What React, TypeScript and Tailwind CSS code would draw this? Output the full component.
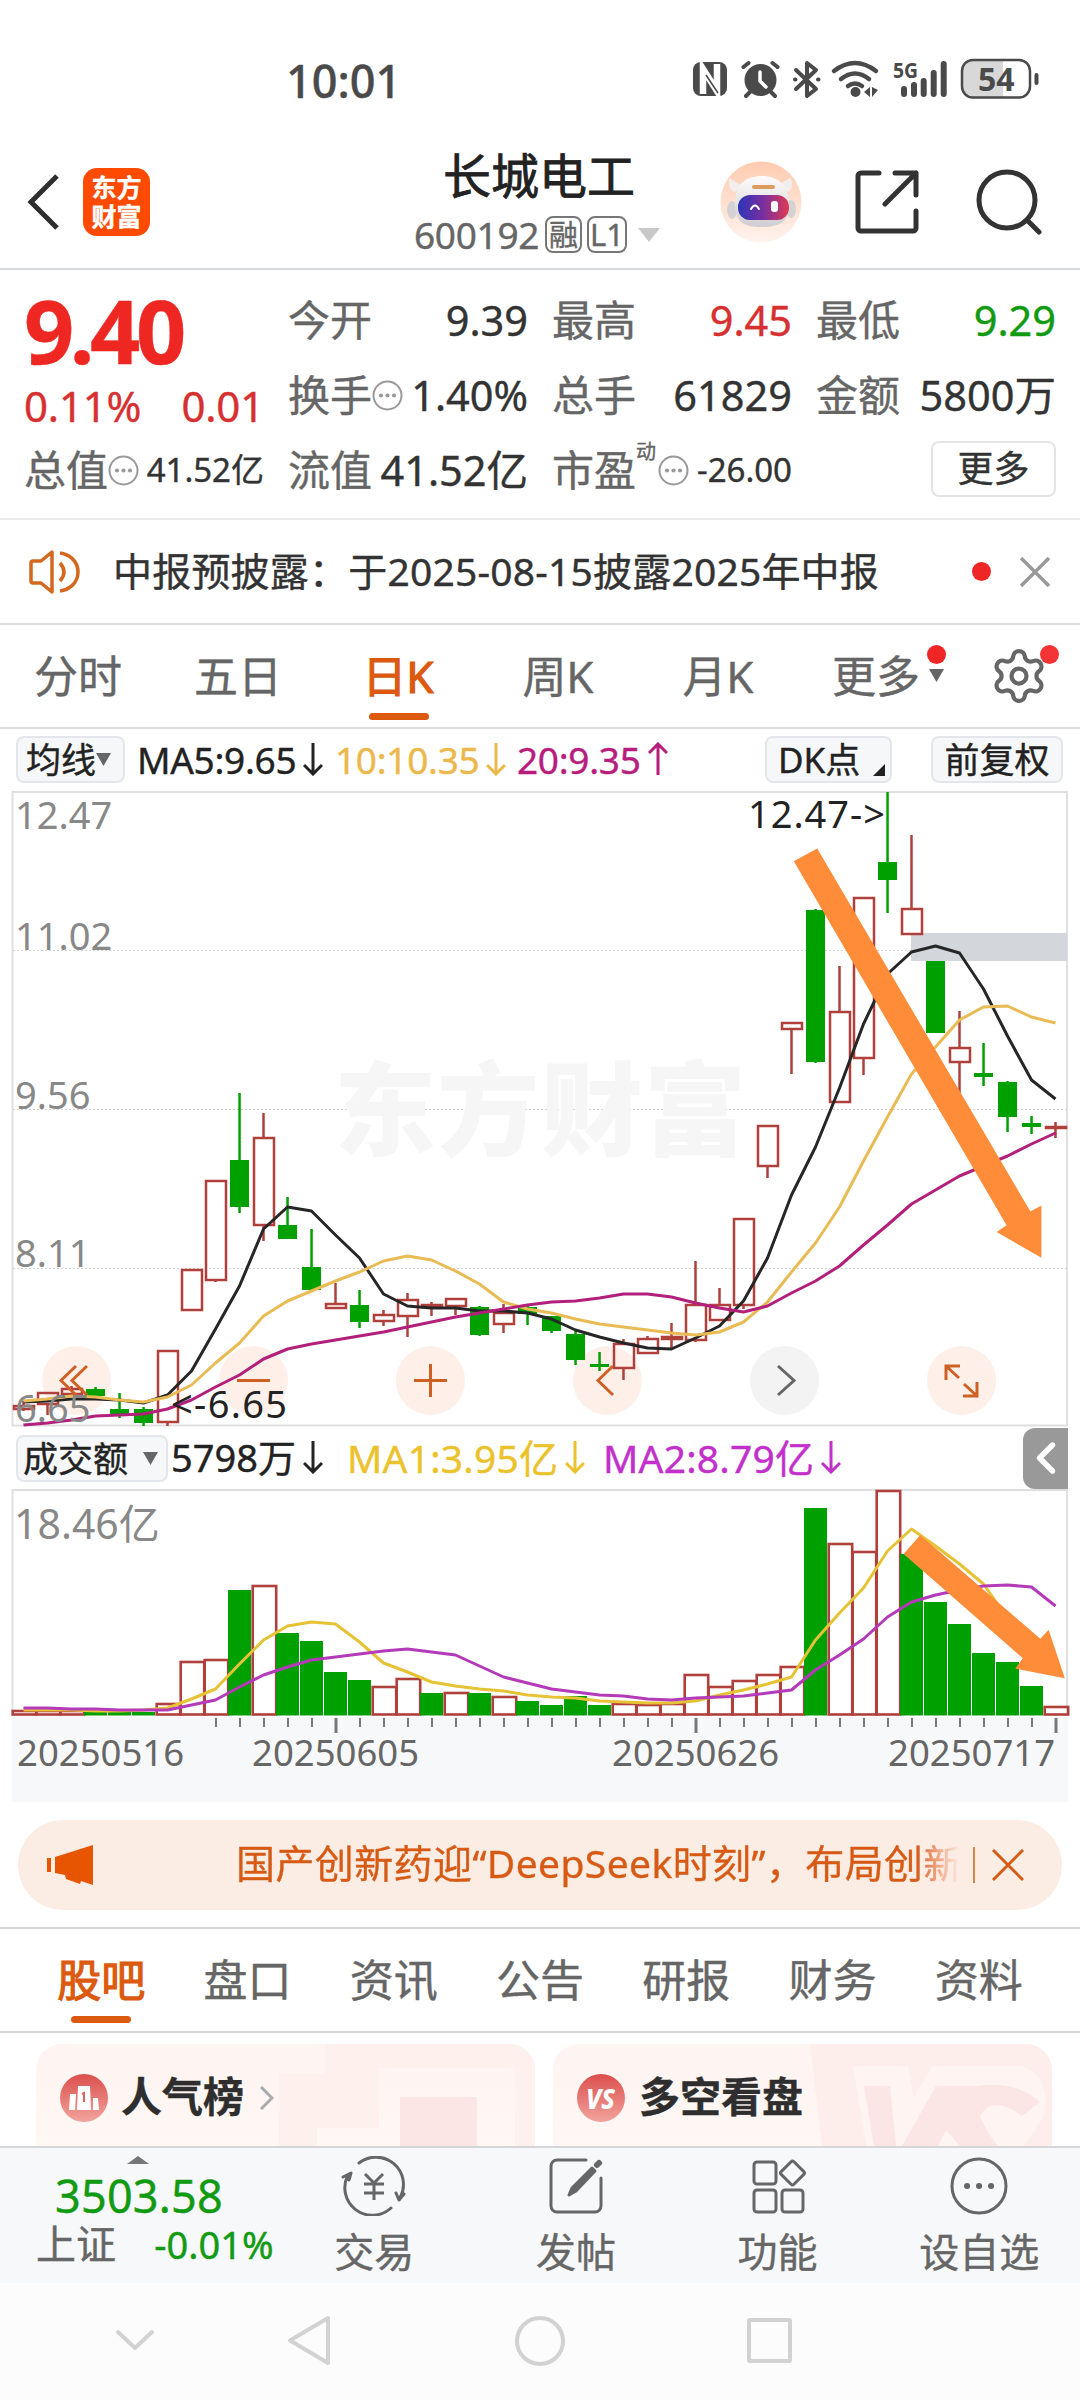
import type { ReactNode } from 'react';
import { ChevronLeft, Settings } from 'lucide-react';
import clsx from 'clsx';

type Color = 'r' | 'g';

// color, wick top, body top, body bottom, wick bottom
type Candle = [Color, number, number, number, number];

const CANDLES: Candle[] = [
  ['r', 1401, 1406, 1409, 1411],
  ['r', 1393, 1393, 1404, 1415],
  ['r', 1386, 1389, 1394, 1397],
  ['g', 1387, 1389, 1396, 1400],
  ['g', 1393, 1409, 1416, 1418],
  ['g', 1407, 1409, 1423, 1426],
  ['r', 1351, 1351, 1422, 1426],
  ['r', 1270, 1270, 1310, 1310],
  ['r', 1181, 1181, 1280, 1282],
  ['g', 1093, 1160, 1207, 1213],
  ['r', 1113, 1138, 1225, 1241],
  ['g', 1197, 1225, 1239, 1239],
  ['g', 1229, 1267, 1290, 1291],
  ['r', 1283, 1304, 1308, 1308],
  ['g', 1290, 1305, 1322, 1328],
  ['r', 1310, 1315, 1321, 1326],
  ['r', 1293, 1300, 1316, 1337],
  ['r', 1302, 1305, 1307, 1316],
  ['r', 1299, 1299, 1306, 1315],
  ['g', 1306, 1307, 1335, 1336],
  ['r', 1304, 1313, 1324, 1333],
  ['g', 1306, 1307, 1314, 1325],
  ['g', 1316, 1316, 1331, 1333],
  ['g', 1331, 1334, 1360, 1365],
  ['g', 1352, 1364, 1367, 1371],
  ['r', 1339, 1344, 1368, 1380],
  ['r', 1336, 1339, 1353, 1354],
  ['r', 1323, 1337, 1339, 1348],
  ['r', 1261, 1305, 1340, 1342],
  ['r', 1288, 1305, 1320, 1320],
  ['r', 1219, 1219, 1305, 1309],
  ['r', 1126, 1126, 1166, 1178],
  ['r', 1023, 1023, 1029, 1074],
  ['g', 909, 910, 1062, 1063],
  ['r', 966, 1012, 1102, 1102],
  ['r', 898, 898, 1058, 1075],
  ['g', 792, 862, 880, 913],
  ['r', 835, 909, 934, 934],
  ['g', 961, 961, 1033, 1033],
  ['r', 1011, 1048, 1062, 1094],
  ['g', 1043, 1073, 1077, 1086],
  ['g', 1081, 1082, 1117, 1132],
  ['g', 1116, 1123, 1127, 1134],
  ['r', 1122, 1127, 1128, 1138],
];

const MA5 = [
  1402, 1401, 1399, 1399, 1400, 1403, 1395, 1371, 1329, 1286, 1229, 1207, 1211, 1235, 1258, 1294, 1306, 1308, 1308,
  1311, 1311, 1313, 1319, 1330, 1337, 1343, 1348, 1349, 1338, 1326, 1301, 1258, 1195, 1147, 1088, 1024, 974, 952, 946,
  953, 989, 1036, 1080, 1099,
];
const MA10 = [
  1401, 1399, 1396, 1397, 1400, 1402, 1397, 1385, 1363, 1343, 1316, 1301, 1291, 1281, 1272, 1261, 1256, 1260, 1271,
  1284, 1302, 1309, 1313, 1319, 1324, 1327, 1330, 1333, 1335, 1332, 1322, 1302, 1272, 1243, 1207, 1161, 1117, 1074,
  1047, 1020, 1007, 1006, 1017, 1023,
];
const MA20 = [
  1425, 1423, 1420, 1416, 1415, 1414, 1409, 1400, 1387, 1375, 1359, 1349, 1344, 1340, 1336, 1332, 1327, 1322, 1317,
  1313, 1309, 1305, 1302, 1301, 1298, 1294, 1294, 1297, 1303, 1308, 1312, 1306, 1293, 1281, 1266, 1245, 1225, 1204,
  1190, 1176, 1166, 1156, 1144, 1133,
];

const VOLUMES: [Color, number][] = [
  ['r', 1711], ['r', 1711], ['r', 1711], ['g', 1712], ['g', 1712], ['g', 1712], ['r', 1704], ['r', 1662], ['r', 1660],
  ['g', 1590], ['r', 1586], ['g', 1633], ['g', 1641], ['g', 1672], ['g', 1680], ['r', 1687], ['r', 1679], ['g', 1693],
  ['r', 1693], ['g', 1693], ['r', 1697], ['g', 1701], ['g', 1705], ['g', 1696], ['g', 1705], ['r', 1704], ['r', 1705],
  ['r', 1704], ['r', 1675], ['r', 1687], ['r', 1681], ['r', 1675], ['r', 1667], ['g', 1508], ['r', 1544], ['r', 1552],
  ['r', 1491], ['g', 1554], ['g', 1602], ['g', 1624], ['g', 1653], ['g', 1662], ['g', 1686], ['r', 1707],
];
const VOL_MA1 = [
  1710, 1710, 1710, 1711, 1711, 1710, 1708, 1699, 1689, 1664, 1640, 1626, 1622, 1624, 1642, 1663, 1672, 1682, 1686,
  1689, 1691, 1695, 1697, 1698, 1701, 1702, 1703, 1703, 1701, 1695, 1690, 1684, 1677, 1640, 1613, 1588, 1551, 1529,
  1546, 1564, 1584, 1618, 1644, 1660,
];
const VOL_MA2 = [
  1708, 1708, 1709, 1709, 1710, 1710, 1710, 1705, 1700, 1687, 1675, 1667, 1660, 1657, 1654, 1651, 1649, 1652, 1655,
  1666, 1677, 1683, 1689, 1692, 1695, 1696, 1699, 1700, 1698, 1697, 1696, 1693, 1690, 1670, 1655, 1639, 1617, 1602,
  1595, 1590, 1586, 1585, 1587, 1606,
];

const RED = '#b0403c';
const GREEN = '#00a000';

const cx = (i: number) => 23.5 + i * 24;
const line = (ys: number[]) => ys.map((y, i) => `${cx(i)},${y}`).join(' ');

function StatusBar() {
  return (
    <div className="flex h-[134px] shrink-0 justify-between pt-[58px] pr-[41px] pl-[286px] text-[#4a4a4a]">
      <span className="text-[45px] leading-[46px] font-medium">10:01</span>
      <svg className="overflow-visible" width="346" height="44" viewBox="693 58 346 44" fill="none" stroke="#4a4a4a" strokeLinecap="round">
        <rect x="693" y="62" width="34" height="34" rx="8" fill="#4a4a4a" stroke="none" />
        <path d="M703 94V69L717 91V64" stroke="#fff" strokeWidth="6.500" strokeLinecap="butt" />
        <path d="M706 75L718 93" stroke="#4a4a4a" strokeWidth="1.500" strokeLinecap="butt" />
        <circle cx="760.5" cy="80" r="16" fill="#4a4a4a" stroke="none" />
        <path d="M743.5 67l5-4M777.5 67l-5-4M750 92l-4 4M771 92l4 4" strokeWidth="4" />
        <path d="M760 72v9l6 6" stroke="#fff" strokeWidth="3.5" />
        <path d="M796 70l20 19-9 7V63l9 7-20 19" strokeWidth="4" strokeLinejoin="round" />
        <path d="M795 79.500h.5M818 79.500h.5" strokeWidth="4" />
        <path d="M834 71q21-16 42 0M841 79q14-11 28 0M848 86q7-5 14 0" strokeWidth="4.500" />
        <circle cx="855.500" cy="92" r="5" fill="#4a4a4a" stroke="none" />
        <path d="M864 92l6-5v10zM872 87v10l6-7z" fill="#4a4a4a" stroke="none" />
        <text x="893" y="78" fontSize="22" fontWeight="700" textLength="25" lengthAdjust="spacingAndGlyphs" fill="#4a4a4a" stroke="none">
          5G
        </text>
        <path d="M904 89v5M914 85v9M923.700 81v13M933.700 73v21M943.700 64v30" strokeWidth="6" />
        <path d="M1003 61h-29a11 11 0 0 0-11 11v14a11 11 0 0 0 11 11h29z" fill="#d8d8d8" stroke="none" />
        <rect x="962" y="60" width="68" height="37.500" rx="11" strokeWidth="2.500" />
        <path d="M1036.500 75v8" strokeWidth="4" />
        <text x="978" y="91" fontSize="32" fontWeight="700" fill="#4a4a4a" stroke="none">
          54
        </text>
      </svg>
    </div>
  );
}

function Robot() {
  return (
    <svg width="82" height="82" viewBox="0 0 82 82">
      <defs>
        <linearGradient id="halo" x1="0" y1="0" x2="0" y2="1">
          <stop offset="0" stopColor="#ffcbb0" />
          <stop offset="1" stopColor="#fff3ee" />
        </linearGradient>
        <linearGradient id="visor">
          <stop offset="0" stopColor="#2b35b8" />
          <stop offset=".5" stopColor="#7a2f9e" />
          <stop offset="1" stopColor="#e03a52" />
        </linearGradient>
        <linearGradient id="shell" x1="0" y1="0" x2="0" y2="1">
          <stop offset="0" stopColor="#fdfbfb" />
          <stop offset="1" stopColor="#cfcdd2" />
        </linearGradient>
      </defs>
      <circle cx="41" cy="41" r="40.500" fill="url(#halo)" />
      <path d="M9 17q-1 11 5 14l8-6zM70 17q5 9-2 14l-8-8z" fill="#f3eeee" />
      <ellipse cx="12" cy="49" rx="5" ry="9" fill="#d5d2d6" />
      <ellipse cx="71" cy="48" rx="5" ry="9" fill="#d5d2d6" />
      <path d="M15 45C14 24 25 15 42 15s27 10 27 29c0 16-8 22-27 22S16 61 15 45z" fill="url(#shell)" />
      <rect x="32" y="24" width="23" height="4" rx="2" fill="#dd9c60" />
      <rect x="18" y="34" width="51" height="25" rx="12" fill="url(#visor)" />
      <path d="M31 48q4-7 8 0" fill="none" stroke="#fff" strokeWidth="2" strokeLinecap="round" />
      <rect x="51" y="40" width="7" height="11" rx="3" fill="#fff" />
    </svg>
  );
}

function Header() {
  return (
    <div className="flex h-[136px] shrink-0 items-center border-b-2 border-[#d6d9dc] pl-[26px]">
      <svg className="mt-[2px]" width="34" height="58" viewBox="0 0 34 58" fill="none" stroke="#2e2e2e" strokeWidth="5">
        <path d="M31 3L5 29l26 26" />
      </svg>
      <div className="mt-[2px] ml-[23px] flex h-[68px] w-[67px] flex-col items-center justify-center rounded-[14px] bg-[#ff4a00] text-[25px] leading-[29px] font-bold text-white">
        <span>东方</span>
        <span>财富</span>
      </div>
      <div className="ml-[264px] flex w-[250px] flex-col items-center">
        <span className="text-[48px] leading-[60px] text-[#222] [-webkit-text-stroke:0.8px]">长城电工</span>
        <div className="mt-[7px] flex w-full items-center gap-[5px] text-[#666]">
          <span className="w-[126px] text-[37px] leading-[44px] tracking-[-0.3px]">600192</span>
          <span className="flex h-[37px] w-[37px] shrink-0 items-center justify-center rounded-[8px] border-2 border-[#777] text-[29px] leading-none">
            融
          </span>
          <span className="flex h-[37px] w-[40px] shrink-0 items-center justify-center rounded-[8px] border-2 border-[#777] text-[31px] leading-none">
            L1
          </span>
          <svg className="ml-[6px] shrink-0" width="22" height="14" viewBox="0 0 22 14">
            <path d="M0 0h22L11 14z" fill="#c8c8c8" />
          </svg>
        </div>
      </div>
      <div className="mt-[2px] ml-[56px]">
        <Robot />
      </div>
      <svg className="mt-[2px] ml-[53px]" width="64" height="64" viewBox="0 0 64 64" fill="none" stroke="#333" strokeWidth="5" strokeLinecap="round" strokeLinejoin="round">
        <path d="M24 3H6a3 3 0 0 0-3 3v52a3 3 0 0 0 3 3h52a3 3 0 0 0 3-3V41M40 3h21v22M61 3L30 34" />
      </svg>
      <svg className="mt-[2px] ml-[57px]" width="66" height="66" viewBox="0 0 66 66" fill="none" stroke="#333" strokeWidth="5" strokeLinecap="round">
        <circle cx="31" cy="31" r="28" />
        <path d="M51 51l12 12" />
      </svg>
    </div>
  );
}

function Dots() {
  return (
    <svg width="31" height="31" viewBox="0 0 31 31" fill="#999">
      <circle cx="15.500" cy="15.500" r="14" fill="none" stroke="#999" strokeWidth="2" />
      <circle cx="9" cy="15.500" r="2.100" />
      <circle cx="15.500" cy="15.500" r="2.100" />
      <circle cx="22" cy="15.500" r="2.100" />
    </svg>
  );
}

function Field({ label, value, className, dots, small }: {
  label: ReactNode;
  value: string;
  className?: string;
  dots?: boolean;
  small?: boolean;
}) {
  return (
    <div className="flex items-center justify-between">
      <span className="flex items-center text-[42px] text-[#666]">
        {label}
        {dots && <Dots />}
      </span>
      <span className={clsx(className ?? 'text-[#333]', small && 'text-[33px]')}>{value}</span>
    </div>
  );
}

function Quote() {
  return (
    <div className="h-[250px] shrink-0 border-b-2 border-[#ebebeb] text-[41.500px] leading-[50px] whitespace-nowrap">
      <div className="flex pt-[25px] pr-[24px] pl-[24px]">
        <div className="w-[240px]">
          <div className="h-[82px] text-[88px] leading-[70px] font-bold tracking-[-4.500px] text-[#ee2722]">9.40</div>
          <div className="flex h-[68px] justify-between pt-[4px] pr-0 text-[42px] tracking-[-0.2px] text-[#d63031]">
            <span>0.11%</span>
            <span>0.01</span>
          </div>
          <Field label="总值" value="41.52亿" dots small />
        </div>
        <div className="ml-[24px] grid w-[240px] content-start gap-[25px]">
          <Field label="今开" value="9.39" />
          <Field label="换手" value="1.40%" dots />
          <Field label="流值" value="41.52亿" />
        </div>
        <div className="ml-[24px] grid w-[240px] content-start gap-[25px]">
          <Field label="最高" value="9.45" className="text-[#d63031]" />
          <Field label="总手" value="61829" />
          <Field
            label={
              <>
                市盈<sup className="top-[-18px] mr-[2px] text-[20px] leading-none">动</sup>
              </>
            }
            value="-26.00"
            dots
            small
          />
        </div>
        <div className="ml-[24px] grid w-[240px] content-start gap-[25px]">
          <Field label="最低" value="9.29" className="text-[#129a12]" />
          <Field label="金额" value="5800万" />
          <div className="mt-[-4px] flex h-[56px] w-[125px] items-center justify-center justify-self-end rounded-[8px] border-2 border-[#e4e4e4] text-[36px] text-[#333]">
            更多
          </div>
        </div>
      </div>
    </div>
  );
}

function Notice() {
  return (
    <div className="flex h-[105px] shrink-0 items-center border-b-2 border-[#dcdcdc] pl-[28px] whitespace-nowrap">
      <svg width="54" height="46" viewBox="0 0 54 46" fill="none" stroke="#d2691e" strokeWidth="3.500" strokeLinejoin="round">
        <path d="M24 3v40L13 34H5q-2 0-2-2V14q0-2 2-2h8z" />
        <path d="M32 14q8 9 0 18M32 4c8 1 18 7 18 19s-10 18-18 19" />
      </svg>
      <span className="ml-[31px] w-[772px] pb-[2px] text-[39px] leading-none tracking-[0.2px] text-[#333]">
        中报预披露：于2025-08-15披露2025年中报
      </span>
      <span className="ml-[87px] h-[19px] w-[19px] rounded-full bg-[#f02525]" />
      <svg className="ml-[29px]" width="30" height="30" viewBox="0 0 30 30" stroke="#999" strokeWidth="3.500">
        <path d="M1 1l28 28M29 1L1 29" />
      </svg>
    </div>
  );
}

const PERIODS = ['分时', '五日', '日K', '周K', '月K'];

function PeriodTabs() {
  return (
    <div className="flex h-[104px] shrink-0 items-center border-b-2 border-[#dcdcdc] text-[44px] leading-none text-[#666]">
      {PERIODS.map((p) => (
        <div key={p} className={clsx('relative flex h-full w-[160px] items-center justify-center pr-[4px]', p === '日K' && 'text-[#dc5a10] [-webkit-text-stroke:1.2px]')}>
          {p}
          {p === '日K' && <span className="absolute bottom-[7px] left-[49px] h-[7px] w-[60px] rounded-full bg-[#dc5a10]" />}
        </div>
      ))}
      <div className="relative ml-[32px] w-[114px]">
        更多
        <span className="absolute top-[-9px] right-0 h-[19px] w-[19px] rounded-full bg-[#f02525]" />
        <svg className="absolute top-[15px] right-[2px]" width="15" height="13" viewBox="0 0 15 13">
          <path d="M0 0h15L7.500 13z" fill="#666" />
        </svg>
      </div>
      <div className="relative ml-[43px]">
        <Settings size={60} strokeWidth={1.7} color="#666" />
        <span className="absolute top-[-1px] right-[-10px] h-[19px] w-[19px] rounded-full bg-[#f53535]" />
      </div>
    </div>
  );
}

function Arrow({ up }: { up?: boolean }) {
  return (
    <svg className={clsx('ml-[7px] shrink-0', up && 'rotate-180')} width="20" height="34" viewBox="0 0 20 34" fill="none" stroke="currentColor" strokeWidth="3">
      <path d="M10 1v31M1 23l9 9 9-9" />
    </svg>
  );
}

function Chip({ children, className }: { children: ReactNode; className?: string }) {
  return (
    <div className={clsx('flex h-[47px] shrink-0 items-center rounded-[8px] border-2 border-[#e3e6ea] bg-[#f6f7f9] text-[35px] leading-none tracking-normal text-[#222]', className)}>
      {children}
    </div>
  );
}

function MaRow() {
  return (
    <div className="flex h-[62px] shrink-0 items-center pb-[2px] pl-[16px] text-[37px] leading-none tracking-[-0.3px] whitespace-nowrap">
      <Chip className="w-[109px] pl-[8px]">
        均线
        <svg width="15" height="13" viewBox="0 0 15 13">
          <path d="M0 0h15L7.500 13z" fill="#666" />
        </svg>
      </Chip>
      <span className="ml-[12px] flex w-[198px] items-center text-[#222]">MA5:9.65<Arrow /></span>
      <span className="flex w-[182px] items-center text-[#ecb84c]">10:10.35<Arrow /></span>
      <span className="flex w-[248px] items-center text-[#b81c7c]">20:9.35<Arrow up /></span>
      <Chip className="w-[127px] justify-between pl-[11px]">
        DK点
        <svg className="mt-[22px] mr-[5px]" width="12" height="12" viewBox="0 0 12 12">
          <path d="M12 0v12H0z" fill="#222" />
        </svg>
      </Chip>
      <Chip className="ml-[39px] w-[132px] justify-center">前复权</Chip>
    </div>
  );
}

const PRICE_LABELS: [string, number][] = [['12.47', 829], ['11.02', 950], ['9.56', 1109], ['8.11', 1267], ['6.65', 1422]];

function PriceChart() {
  return (
    <svg className="block shrink-0" width="1080" height="636" viewBox="0 791 1080 636" fill="none">
      <rect x="12.500" y="792" width="1054.500" height="633.500" stroke="#dfdfdf" strokeWidth="2" />
      <g stroke="#d4d4d4" strokeDasharray="2 2">
        <path d="M13 950.500h1054M13 1109.500h1054M13 1268.500h1054" />
      </g>
      <text x="334" y="1148" fontSize="102" fontWeight="900" fill="#f6f6f6" textLength="412">
        东方财富
      </text>
      <rect x="911" y="933" width="156" height="28" fill="#d3d6db" />
      {[76.5, 253.5, 430.5, 607.5, 784.5, 961.5].map((x) => (
        <circle key={x} cx={x} cy="1380.500" r="34.500" fill={x === 784.5 ? '#f3f3f3' : '#fef0e8'} />
      ))}
      {CANDLES.map(([c, wt, bt, bb, wb], i) => {
        const x = cx(i);
        if (c === 'g') {
          return (
            <g key={i} fill={GREEN}>
              <rect x={x - 1.2} y={wt} width="2.500" height={wb - wt} />
              <rect x={x - 9.5} y={bt} width="19" height={bb - bt} />
            </g>
          );
        }
        return (
          <g key={i} stroke={RED} strokeWidth="2.500">
            <path d={`M${x} ${wt}V${bt}M${x} ${bb}V${wb}`} />
            <rect x={x - 9.5} y={bt} width="20" height={bb - bt} />
          </g>
        );
      })}
      <g strokeWidth="3" strokeLinejoin="round">
        <polyline points={line(MA5)} stroke="#262626" />
        <polyline points={line(MA10)} stroke="#e9bb55" />
        <polyline points={line(MA20)} stroke="#b3207c" />
      </g>
      {PRICE_LABELS.map(([t, y]) => (
        <text key={t} x="15" y={y} fontSize="38" fill="#888">
          {t}
        </text>
      ))}
      <g stroke="#cf6024" strokeWidth="3">
        <path d="M76 1366l-15 14.500 15 14.500M87 1366l-15 14.500 15 14.500" />
        <path d="M237 1380.500h33M414 1380.500h33M430.500 1364v33" />
        <path d="M613 1366l-15 14.500 15 14.500" />
        <path d="M778 1366l16 14.500-16 14.500" stroke="#666" />
        <path d="M946 1380v-14h14M946 1366l13 12M977 1382v14h-14M977 1396l-13-12" />
      </g>
      <g fontSize="38" fill="#222">
        <text x="748" y="828" textLength="137">
          {'12.47->'}
        </text>
        <text x="171" y="1418" textLength="116">
          {'<-6.65'}
        </text>
      </g>
      <path d="M793.800 861.200L817.200 848.600 1030.400 1211.400 1041.400 1205.500V1257.700L996.600 1232 1006.600 1225.300z" fill="#ff8c38" />
    </svg>
  );
}

function VolumeRow() {
  return (
    <div className="flex h-[62px] shrink-0 items-center pl-[16px] text-[39px] leading-none whitespace-nowrap">
      <Chip className="w-[152px] justify-between pr-[8px] pl-[5px]">
        成交额
        <svg width="15" height="13" viewBox="0 0 15 13">
          <path d="M0 0h15L7.500 13z" fill="#666" />
        </svg>
      </Chip>
      <span className="ml-[3px] flex w-[176px] items-center pb-[2px] text-[38px] text-[#222]">5798万<Arrow /></span>
      <span className="flex w-[256px] items-center pb-[2px] tracking-[0.2px] text-[#ecc22c]">MA1:3.95亿<Arrow /></span>
      <span className="flex w-[420px] items-center pb-[2px] tracking-[0.2px] text-[#c22fcb]">MA2:8.79亿<Arrow /></span>
      <div className="flex h-[61px] w-[45px] items-center justify-center rounded-l-[12px] bg-[#999]">
        <ChevronLeft className="shrink-0" size={52} strokeWidth={2.5} color="#fff" />
      </div>
    </div>
  );
}

const DATES: [string, number][] = [['20250516', 17], ['20250605', 252], ['20250626', 612], ['20250717', 888]];
const MAJOR = [13, 28, 43];

function VolumeChart() {
  return (
    <svg className="block shrink-0" width="1080" height="313" viewBox="0 1489 1080 313" fill="none">
      <rect x="12" y="1717" width="1056" height="85" fill="#f7f8fa" />
      <path d="M12.500 1716V1490H1067v226" stroke="#dfdfdf" strokeWidth="2" />
      {VOLUMES.map(([c, top], i) =>
        c === 'g' ? (
          <rect key={i} x={cx(i) - 11.500} y={top} width="23" height={1715.500 - top} fill={GREEN} />
        ) : (
          <rect key={i} x={cx(i) - 10.800} y={top} width="23.500" height={1714.500 - top} stroke={RED} strokeWidth="2.600" />
        ),
      )}
      <g strokeWidth="3" strokeLinejoin="round">
        <polyline points={line(VOL_MA1)} stroke="#e6c235" />
        <polyline points={line(VOL_MA2)} stroke="#b43ab9" />
      </g>
      {VOLUMES.slice(8).map((_, i) => {
        const major = MAJOR.includes(i + 8);
        return <path key={i} d={`M${cx(i + 8) + 0.5} 1718v${major ? 15 : 9}`} stroke="#777" strokeWidth={major ? 3 : 2} />;
      })}
      <text x="14" y="1539" fontSize="41" fill="#888">
        18.46亿
      </text>
      {DATES.map(([t, x]) => (
        <text key={t} x={x} y="1766" fontSize="36.500" fill="#666">
          {t}
        </text>
      ))}
      <path d="M903.600 1554L920.200 1535 1040.300 1638.700 1048.600 1629.700 1064.800 1678.300 1015.200 1668.700 1022.800 1658.300z" fill="#ff8c38" />
    </svg>
  );
}

function Banner() {
  return (
    <div className="h-[125px] shrink-0 px-[18px] pt-[18px]">
      <div className="flex h-[90px] items-center rounded-full bg-[#fcede4] pl-[29px] text-[#d65a14]">
        <svg width="47" height="40" viewBox="0 0 47 40" fill="#e85500">
          <path d="M0 13h4v14H0zM8 12L46 0v40l-12-4-1 3-14-5-1-4-10-2z" />
        </svg>
        <div className="mb-[4px] ml-[142px] w-[724px] shrink-0 overflow-hidden bg-gradient-to-r from-[#d65a14] from-94% to-[#fcede4] bg-clip-text text-[39px] leading-[60px] tracking-[0.4px] whitespace-nowrap text-transparent">
          国产创新药迎“DeepSeek时刻”，布局创新
        </div>
        <span className="ml-[13px] h-[36px] w-[2px] bg-[#d8824e]" />
        <svg className="ml-[17px]" width="32" height="32" viewBox="0 0 32 32" stroke="#d65a14" strokeWidth="3">
          <path d="M1 1l30 30M31 1L1 31" />
        </svg>
      </div>
    </div>
  );
}

const SECTIONS = ['股吧', '盘口', '资讯', '公告', '研报', '财务', '资料'];

function SectionTabs() {
  return (
    <div className="flex h-[106px] shrink-0 border-y-2 border-[#d6d6d6] px-[28px] text-[44px] leading-none text-[#666]">
      {SECTIONS.map((s, i) => (
        <div key={s} className={clsx('relative flex flex-1 items-center justify-center', i === 0 && 'text-[#dc5a10] [-webkit-text-stroke:1.2px]')}>
          {s}
          {i === 0 && <span className="absolute bottom-[8px] h-[7px] w-[60px] rounded-full bg-[#dc5a10]" />}
        </div>
      ))}
    </div>
  );
}

function Cards() {
  return (
    <div className="flex h-[113px] shrink-0 gap-[18px] overflow-hidden px-[36px] pt-[11px] text-[41px] leading-none font-bold text-[#2e2e2e]">
      <div className="relative flex h-[180px] w-[499px] shrink-0 overflow-hidden rounded-[26px] bg-gradient-to-b from-[#fef4f1] to-[#fffaf7] pt-[30px] pl-[24px]">
        <svg className="absolute top-0 right-0" width="260" height="102" viewBox="0 0 260 102">
          <path d="M50 0h210v102h-20V24H104v60H42v18H4V30h46z" fill="#fdf0ed" />
          <path d="M125 53h77v49h-77z" fill="#fbe6e3" />
        </svg>
        <svg width="48" height="48" viewBox="0 0 48 48">
          <defs>
            <linearGradient id="badge" x1="0" y1="0" x2="0" y2="1">
              <stop offset="0" stopColor="#db4f4c" />
              <stop offset="1" stopColor="#f2a39d" />
            </linearGradient>
          </defs>
          <circle cx="24" cy="24" r="24" fill="url(#badge)" />
          <path d="M10 20h6l-1 16H9zM18 12h12l1 24H17zM33 24h5l1 12h-6z" fill="#fff" />
          <path d="M22 20l2-1v9" fill="none" stroke="#e0605c" strokeWidth="2" />
        </svg>
        <span className="relative mt-[2px] ml-[13px]">人气榜</span>
        <svg className="mt-[12px] ml-[16px]" width="14" height="24" viewBox="0 0 14 24" fill="none" stroke="#aaa" strokeWidth="3">
          <path d="M1 1l11 11L1 23" />
        </svg>
      </div>
      <div className="relative flex h-[180px] w-[499px] shrink-0 overflow-hidden rounded-[26px] bg-gradient-to-b from-[#fef4f1] to-[#fffaf7] pt-[30px] pl-[24px]">
        <svg className="absolute top-0 right-0" width="242" height="102" viewBox="0 0 242 102">
          <path d="M0 0h242v102H12z" fill="#fdeeeb" />
          <path d="M43 22h55l6 32 18-32h90q30 12 22 50l-20 30H56z" fill="#fef4f1" />
          <path d="M54 42h26l6 60H64zM92 102l34-60h40q40-6 64 16l-18 14q-30-22-42 0 4 12 18 30h-38l-14-16-8 16z" fill="#fbe6e5" />
        </svg>
        <svg width="48" height="48" viewBox="0 0 48 48">
          <circle cx="24" cy="24" r="24" fill="url(#badge)" />
          <text x="9" y="35" fontSize="29" fontWeight="800" fontStyle="italic" fill="#fff" textLength="29" lengthAdjust="spacingAndGlyphs">
            VS
          </text>
        </svg>
        <span className="relative mt-[2px] ml-[14px]">多空看盘</span>
      </div>
    </div>
  );
}

function BarItem({ label, children }: { label: string; children: ReactNode }) {
  return (
    <div className="flex w-[202px] flex-col items-center pt-[8px]">
      <svg width="66" height="60" viewBox="-33 -30 66 60" fill="none" stroke="#666" strokeWidth="3" strokeLinecap="round" strokeLinejoin="round">
        {children}
      </svg>
      <span className="mt-[16px] text-[40px] leading-[40px] text-[#666]">{label}</span>
    </div>
  );
}

function BottomBar() {
  return (
    <div className="flex h-[137px] shrink-0 border-t-2 border-[#d4d6d9] bg-[#f7f8fa] leading-none whitespace-nowrap">
      <div className="w-[274px] text-[#129a12]">
        <svg className="mt-[8px] ml-[127px]" width="22" height="8" viewBox="0 0 22 8">
          <path d="M0 8L11 0l11 8z" fill="#777" />
        </svg>
        <div className="mt-[9px] ml-[55px] text-[45px] tracking-[0.2px]">3503.58</div>
        <div className="mt-[6px] flex items-center justify-between pl-[36px] text-[40px]">
          <span className="text-[#666]">上证</span>
          <span className="text-[38px]">-0.01%</span>
        </div>
      </div>
      <BarItem label="交易">
        <path d="M-15-23A27.500 27.500 0 0 1 26 12M30 8l-5 6-3-7M17 22A27.500 27.500 0 0 1-26-11M-31-9l8-4-2 7" />
        <path d="M-9-12L0-3l9-9M-10-2h20M-10 7h20M0-3v17" strokeLinecap="butt" />
      </BarItem>
      <BarItem label="发帖">
        <path d="M10-26h-29a6 6 0 0 0-6 6v40a6 6 0 0 0 6 6h38a6 6 0 0 0 6-6V-8" />
        <path d="M-7 9l3-7L16-18l3 3L0 5z" fill="#666" />
        <path d="M21-21l2-2" strokeWidth="6" />
      </BarItem>
      <BarItem label="功能">
        <rect x="-24" y="-24" width="22" height="22" rx="3" />
        <rect x="-24" y="4" width="22" height="22" rx="3" />
        <rect x="4" y="4" width="21" height="22" rx="3" />
        <rect x="5.500" y="-22" width="18" height="18" rx="2" transform="rotate(45 14.500 -13)" />
      </BarItem>
      <BarItem label="设自选">
        <circle cx="0" cy="0" r="27" />
        <path d="M-12 0h.1M0 0h.1M12 0h.1" strokeWidth="6" />
      </BarItem>
    </div>
  );
}

function SystemNav() {
  return (
    <div className="h-[118px] shrink-0 bg-[#fcfcfc]">
      <svg width="1080" height="118" viewBox="0 2283 1080 118" fill="none" stroke="#d2d2d2" strokeWidth="4" strokeLinecap="round" strokeLinejoin="round">
        <path d="M118 2332l17 16 17-16" />
        <path d="M328 2318v45l-38-22.500z" />
        <circle cx="540" cy="2341" r="23" />
        <rect x="749" y="2320" width="41" height="41" rx="1" />
      </svg>
    </div>
  );
}

export default function App() {
  return (
    <div
      className="flex h-[2400px] w-[1080px] flex-col overflow-hidden bg-white font-['Noto_Sans','Noto_Sans_CJK_SC',sans-serif] [-webkit-text-stroke:0.4px]"
      lang="zh-CN"
    >
      <StatusBar />
      <Header />
      <Quote />
      <Notice />
      <PeriodTabs />
      <MaRow />
      <PriceChart />
      <VolumeRow />
      <VolumeChart />
      <Banner />
      <SectionTabs />
      <Cards />
      <BottomBar />
      <SystemNav />
    </div>
  );
}
